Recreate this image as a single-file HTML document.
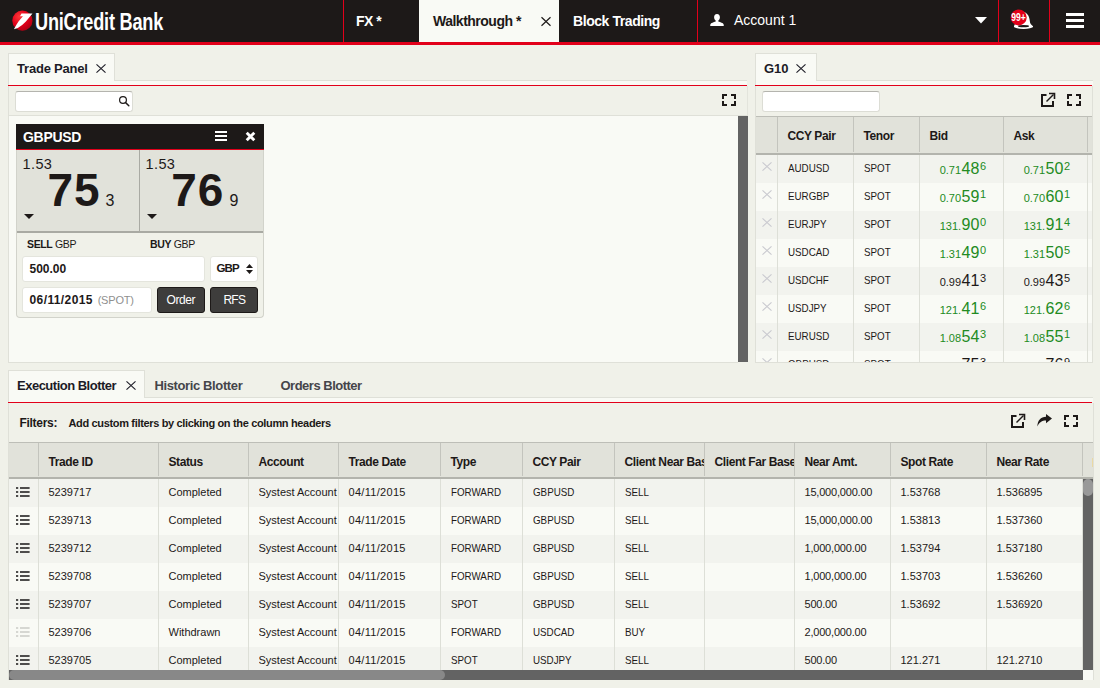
<!DOCTYPE html>
<html lang="en">
<head>
<meta charset="utf-8">
<title>UniCredit Bank - FX Trading</title>
<style>
*{box-sizing:border-box;margin:0;padding:0}
html,body{width:1100px;height:688px;overflow:hidden}
body{background:#f0f1e9;font-family:"Liberation Sans",sans-serif;color:#1d1918;position:relative;font-size:11px}
.abs{position:absolute}
.t{position:absolute;white-space:nowrap;line-height:1}
svg{position:absolute;overflow:visible}
/* top bar */
#top{left:0;top:0;width:1100px;height:42px;background:#1d1918}
#topline{left:0;top:42px;width:1100px;height:3px;background:#e2001a}
.vsep{position:absolute;top:0;width:1px;height:42px;background:#e2001a}
#navact{left:419px;top:0;width:140px;height:42px;background:#f9faf5}
.nav{font-weight:bold;font-size:14px;color:#fff}
/* panels */
.tab{position:absolute;background:#f9faf5;border:1px solid #dfe0d8;border-bottom:none;height:28px}
.strip{position:absolute;background:#f9faf5;height:5px;border-top:1px solid #dfe0d8}
.red{position:absolute;height:1px;background:#e2001a}
.tabtxt{font-weight:bold;font-size:13px;color:#1c1b26}
.tabtxt2{font-weight:bold;font-size:13px;color:#45454a}
.inp{position:absolute;background:#fff;border:1px solid #dcddd5;border-top-color:#b4b4ae;border-radius:3px}
.body{position:absolute;background:#f9faf5}
.hline{position:absolute;height:1px}
.vline{position:absolute;width:1px}
.sb{position:absolute;background:#636363}
/* grids */
.gh{position:absolute;background:#e1e2da}
.ght{font-weight:bold;font-size:12px;color:#1d1918;letter-spacing:-0.4px}
.u{transform-origin:0 50%;transform:scaleX(0.89)}
.row{position:absolute;height:28px}
.odd{background:#f2f3ee}
.even{background:#f9faf5}
.c{position:absolute;white-space:nowrap;line-height:1;font-size:11px;color:#1d1918;top:8px}
.pr{position:absolute;top:0;height:28px;white-space:nowrap;line-height:1}
.ps{font-size:11px;position:relative;top:6px}
.pb{font-size:16px;position:relative;top:6px;margin-left:0.5px}
.pp{font-size:11px;position:relative;top:2px;margin-left:0.5px}
</style>
</head>
<body>
<!-- ===== TOP BAR ===== -->
<div id="top" class="abs"></div>
<div id="topline" class="abs"></div>
<div id="navact" class="abs"></div>
<div class="vsep" style="left:343px"></div>
<div class="vsep" style="left:697px"></div>
<div class="vsep" style="left:998px"></div>
<div class="vsep" style="left:1049px"></div>
<svg style="left:10px;top:8px" width="26" height="26" viewBox="10 8 26 26">
<defs><radialGradient id="lg" cx="35%" cy="30%" r="75%"><stop offset="0" stop-color="#ff3a3a"/><stop offset="0.55" stop-color="#e2001a"/><stop offset="1" stop-color="#b00014"/></radialGradient></defs>
<circle cx="22.4" cy="20.7" r="10.1" fill="url(#lg)"/>
<path d="M21.5 13.4 L32.5 13.4 L25.9 21.4 Q22 25.6 17.8 27.9 L13.9 29.2 Q16 25 18.5 21.4 L22.9 16.2 L20 16.2 Z" fill="#fff"/>
</svg>
<div id="brand" class="t" style="left:34.7px;top:9.6px;font-size:24px;font-weight:bold;color:#fff;transform-origin:0 0;transform:scaleX(0.757);letter-spacing:-0.3px">UniCredit Bank</div>

<div id="n1" class="t nav" style="left:356px;top:14px;letter-spacing:-0.5px">FX *</div>
<div id="n2" class="t nav" style="left:433px;top:14px;color:#1d1918;letter-spacing:-0.5px">Walkthrough *</div>
<svg style="left:541px;top:17px" width="10" height="9" viewBox="0 0 10 9"><path d="M0.5 0.3 L9.5 8.7 M9.5 0.3 L0.5 8.7" stroke="#1d1918" stroke-width="1.2" fill="none"/></svg>
<div id="n3" class="t nav" style="left:573px;top:14px;letter-spacing:-0.43px">Block Trading</div>
<svg style="left:710px;top:14px" width="14" height="12" viewBox="0 0 14 12"><path d="M7 0 C9 0 9.9 1.4 9.9 3.2 C9.9 4.8 9.2 6 8.3 6.6 L8.3 7.6 C10.5 8.4 13 9 13.6 10.2 L13.8 12 L0.2 12 L0.4 10.2 C1 9 3.5 8.4 5.7 7.6 L5.7 6.6 C4.8 6 4.1 4.8 4.1 3.2 C4.1 1.4 5 0 7 0 Z" fill="#fff"/></svg>
<div id="n4" class="t" style="left:734px;top:13px;font-size:14px;color:#fff">Account 1</div>
<svg style="left:975px;top:17px" width="12" height="7" viewBox="0 0 12 7"><path d="M0 0 L12 0 L6 6.5 Z" fill="#fff"/></svg>
<!-- bell + badge -->
<svg style="left:1008px;top:8px" width="28" height="24" viewBox="1008 8 28 24">
<path d="M1021 11.5 C1027 11.5 1029.5 16 1029.8 21 C1030 24 1031.5 25 1033 26.2 L1033 27.2 L1014 27.2 L1014 26 Z" fill="#fff"/>
<ellipse cx="1023.5" cy="26.6" rx="9.2" ry="2.3" fill="#fff"/>
<ellipse cx="1023.5" cy="26.2" rx="5.5" ry="1.1" fill="#1d1918"/>
<circle cx="1018.7" cy="17.4" r="8" fill="#e2001a"/>
<text x="1018.6" y="20.6" font-family="Liberation Sans, sans-serif" font-size="10.2" font-weight="bold" fill="#fff" text-anchor="middle" textLength="14.5" lengthAdjust="spacingAndGlyphs">99+</text>
</svg>
<div class="abs" style="left:1066px;top:13px;width:18px;height:3px;background:#fff"></div>
<div class="abs" style="left:1066px;top:19px;width:18px;height:3px;background:#fff"></div>
<div class="abs" style="left:1066px;top:25px;width:18px;height:3px;background:#fff"></div>

<!-- ===== TRADE PANEL ===== -->
<div class="tab" style="left:8px;top:53px;width:107px"></div>
<div class="strip" style="left:8px;top:80px;width:739px;border-left:1px solid #dfe0d8"></div>
<div class="abs" style="left:9px;top:80px;width:105px;height:2px;background:#f9faf5"></div>
<div class="red" style="left:8px;top:85px;width:739px"></div>
<div id="tt1" class="t tabtxt" style="left:17px;top:62px;letter-spacing:-0.2px">Trade Panel</div>
<svg style="left:96px;top:64px" width="10" height="9" viewBox="0 0 10 9"><path d="M0.5 0.3 L9.5 8.7 M9.5 0.3 L0.5 8.7" stroke="#1c1b26" stroke-width="1.1" fill="none"/></svg>
<div class="abs" style="left:8px;top:86px;width:740px;height:30px;border-left:1px solid #dfe0d8;border-right:1px solid #e3e4dc;border-bottom:1px solid #dfe0d8"></div>
<div class="inp" style="left:15px;top:91px;width:118px;height:21px"></div>
<svg style="left:118px;top:95px" width="12" height="12" viewBox="118 95 12 12"><circle cx="123" cy="100" r="3.4" stroke="#1d1918" stroke-width="1.2" fill="none"/><path d="M125.5 102.5 L128.8 105.8" stroke="#1d1918" stroke-width="1.5" stroke-linecap="round"/></svg>
<svg style="left:722px;top:94px" width="14" height="12" viewBox="0 0 14 12"><path d="M1 5 V1 H5 M9 1 H13 V5 M13 7 V11 H9 M5 11 H1 V7" stroke="#1d1918" stroke-width="2" fill="none"/></svg>
<div class="body" style="left:8px;top:116px;width:730px;height:247px;border-left:1px solid #dfe0d8;border-bottom:1px solid #dfe0d8"></div>
<div class="sb" style="left:738px;top:116px;width:10px;height:246px"></div>
<div class="abs" style="left:16px;top:124px;width:248px;height:194px;background:#f0f1e9;border:1px solid #d2d3cb;border-top:none;border-radius:0 0 4px 4px"></div>
<div class="abs" style="left:16px;top:124px;width:248px;height:25px;background:#1d1918"></div>
<div class="abs" style="left:16px;top:149px;width:248px;height:1px;background:#e2001a"></div>
<div id="g1" class="t" style="left:23px;top:129.6px;font-size:14px;font-weight:bold;color:#fff;letter-spacing:-0.3px">GBPUSD</div>
<div class="abs" style="left:215px;top:130.5px;width:12px;height:2px;background:#fff"></div>
<div class="abs" style="left:215px;top:134.7px;width:12px;height:2px;background:#fff"></div>
<div class="abs" style="left:215px;top:139px;width:12px;height:2px;background:#fff"></div>
<svg style="left:244.6px;top:130.8px" width="11" height="11" viewBox="0 0 11 11"><path d="M1.7 1.7 L9.3 9.3 M9.3 1.7 L1.7 9.3" stroke="#fff" stroke-width="2.9" fill="none"/></svg>
<div class="abs" style="left:17px;top:150px;width:246px;height:81px;background:#e1e2da"></div>
<div class="abs" style="left:139px;top:150px;width:1px;height:81px;background:#a9aaa3"></div>
<div class="abs" style="left:17px;top:231px;width:246px;height:2px;background:#a9aaa3"></div>
<div id="p1a" class="t" style="left:22.5px;top:156.6px;font-size:14.5px;color:#1d1918;letter-spacing:0.4px">1.53</div>
<div id="p1b" class="t" style="left:47.5px;top:167px;font-size:46px;font-weight:bold;color:#1d1918;letter-spacing:1px">75</div>
<div id="p1c" class="t" style="left:105.5px;top:193px;font-size:16px;color:#1d1918">3</div>
<svg style="left:24px;top:214px" width="10" height="5" viewBox="0 0 10 5"><path d="M0 0 H10 L5 5 Z" fill="#1d1918"/></svg>
<div id="p2a" class="t" style="left:145.5px;top:156.6px;font-size:14.5px;color:#1d1918;letter-spacing:0.4px">1.53</div>
<div id="p2b" class="t" style="left:171.2px;top:167px;font-size:46px;font-weight:bold;color:#1d1918;letter-spacing:1px">76</div>
<div id="p2c" class="t" style="left:229.5px;top:193px;font-size:16px;color:#1d1918">9</div>
<svg style="left:147px;top:214px" width="10" height="5" viewBox="0 0 10 5"><path d="M0 0 H10 L5 5 Z" fill="#1d1918"/></svg>
<div id="l1" class="t" style="left:27px;top:239px;font-size:10.5px;color:#1d1918;letter-spacing:-0.35px"><b>SELL</b> GBP</div>
<div id="l2" class="t" style="left:150px;top:239px;font-size:10.5px;color:#1d1918;letter-spacing:-0.35px"><b>BUY</b> GBP</div>
<div class="abs" style="left:22px;top:256px;width:183px;height:26px;background:#fff;border:1px solid #e4e5dd;border-radius:3px"></div>
<div id="i1" class="t" style="left:29.5px;top:263px;font-size:12px;font-weight:bold;color:#1d1918">500.00</div>
<div class="abs" style="left:210px;top:256px;width:48px;height:26px;background:#fff;border:1px solid #e4e5dd;border-radius:3px"></div>
<div id="i2" class="t" style="left:216.5px;top:263px;font-size:11.5px;font-weight:bold;color:#1d1918;letter-spacing:-0.9px">GBP</div>
<svg style="left:246px;top:264px" width="7" height="10" viewBox="0 0 7 10"><path d="M0 4 L3.5 0 L7 4 Z M0 6 L3.5 10 L7 6 Z" fill="#1d1918"/></svg>
<div class="abs" style="left:22px;top:287px;width:130px;height:26px;background:#fff;border:1px solid #e4e5dd;border-radius:3px"></div>
<div id="i3" class="t" style="left:29.5px;top:294px;font-size:12px;font-weight:bold;color:#1d1918;letter-spacing:0.4px">06/11/2015 <span style="font-weight:normal;color:#8f8f8f;letter-spacing:-0.2px;font-size:11px;margin-left:1px">(SPOT)</span></div>
<div class="abs" style="left:157px;top:287px;width:48px;height:26px;background:#3e3d3c;border:1px solid #1d1918;border-radius:3px"></div>
<div id="b1" class="t" style="left:166.5px;top:294px;font-size:12px;color:#fff;letter-spacing:-0.4px">Order</div>
<div class="abs" style="left:210px;top:287px;width:48px;height:26px;background:#3e3d3c;border:1px solid #1d1918;border-radius:3px"></div>
<div id="b2" class="t" style="left:223.5px;top:294px;font-size:12px;color:#fff;letter-spacing:-0.8px">RFS</div>


<!-- ===== G10 PANEL ===== -->
<div class="tab" style="left:755px;top:53px;width:62px"></div>
<div class="strip" style="left:755px;top:80px;width:338px;border-left:1px solid #dfe0d8"></div>
<div class="abs" style="left:756px;top:80px;width:60px;height:2px;background:#f9faf5"></div>
<div class="red" style="left:755px;top:85px;width:337px"></div>
<div id="tt2" class="t tabtxt" style="left:764px;top:62px">G10</div>
<svg style="left:796px;top:64px" width="10" height="9" viewBox="0 0 10 9"><path d="M0.5 0.3 L9.5 8.7 M9.5 0.3 L0.5 8.7" stroke="#1c1b26" stroke-width="1.1" fill="none"/></svg>
<div class="abs" style="left:755px;top:86px;width:338px;height:30px;border-left:1px solid #dfe0d8;border-right:1px solid #dfe0d8"></div>
<div class="inp" style="left:762px;top:91px;width:118px;height:21px"></div>
<svg style="left:1041px;top:93px" width="14" height="14" viewBox="0 0 14 14"><path d="M5.5 2 H1 V13 H12 V8" stroke="#1d1918" stroke-width="2" fill="none"/><path d="M5.5 8.5 L12.5 1.5" stroke="#1d1918" stroke-width="1.4" fill="none"/><path d="M8 0.5 H13.5 V6" stroke="#1d1918" stroke-width="1.6" fill="none"/></svg><svg style="left:1067px;top:94px" width="14" height="12" viewBox="0 0 14 12"><path d="M1 5 V1 H5 M9 1 H13 V5 M13 7 V11 H9 M5 11 H1 V7" stroke="#1d1918" stroke-width="2" fill="none"/></svg>
<div id="g10" class="abs" style="left:755px;top:116px;width:338px;height:247px;overflow:hidden;border-left:1px solid #dfe0d8;border-right:1px solid #dfe0d8;border-bottom:1px solid #dfe0d8;background:#f9faf5">
<div class="gh" style="left:0;top:0;width:338px;height:37px;border-top:1px solid #bdbeb7"></div>
<div class="abs" style="left:0;top:37px;width:338px;height:2px;background:#b3b4ad"></div>
<div class="t ght" style="left:31.5px;top:14px">CCY Pair</div>
<div class="t ght" style="left:107.5px;top:14px">Tenor</div>
<div class="t ght" style="left:173.5px;top:14px">Bid</div>
<div class="t ght" style="left:257.5px;top:14px">Ask</div>
<div class="row odd" style="left:0;top:39px;width:338px"><svg style="left:6px;top:7px" width="10" height="9" viewBox="0 0 10 9"><path d="M0.5 0.3 L9.5 8.7 M9.5 0.3 L0.5 8.7" stroke="#c9c9cf" stroke-width="1.1" fill="none"/></svg><span class="c u" style="left:31.5px">AUDUSD</span><span class="c u" style="left:107.5px">SPOT</span><span class="pr" style="right:108px;color:#228b22"><span class="ps">0.71</span><span class="pb">48</span><span class="pp">6</span></span><span class="pr" style="right:24px;color:#228b22"><span class="ps">0.71</span><span class="pb">50</span><span class="pp">2</span></span></div>
<div class="row even" style="left:0;top:67px;width:338px"><svg style="left:6px;top:7px" width="10" height="9" viewBox="0 0 10 9"><path d="M0.5 0.3 L9.5 8.7 M9.5 0.3 L0.5 8.7" stroke="#c9c9cf" stroke-width="1.1" fill="none"/></svg><span class="c u" style="left:31.5px">EURGBP</span><span class="c u" style="left:107.5px">SPOT</span><span class="pr" style="right:108px;color:#228b22"><span class="ps">0.70</span><span class="pb">59</span><span class="pp">1</span></span><span class="pr" style="right:24px;color:#228b22"><span class="ps">0.70</span><span class="pb">60</span><span class="pp">1</span></span></div>
<div class="row odd" style="left:0;top:95px;width:338px"><svg style="left:6px;top:7px" width="10" height="9" viewBox="0 0 10 9"><path d="M0.5 0.3 L9.5 8.7 M9.5 0.3 L0.5 8.7" stroke="#c9c9cf" stroke-width="1.1" fill="none"/></svg><span class="c u" style="left:31.5px">EURJPY</span><span class="c u" style="left:107.5px">SPOT</span><span class="pr" style="right:108px;color:#228b22"><span class="ps">131.</span><span class="pb">90</span><span class="pp">0</span></span><span class="pr" style="right:24px;color:#228b22"><span class="ps">131.</span><span class="pb">91</span><span class="pp">4</span></span></div>
<div class="row even" style="left:0;top:123px;width:338px"><svg style="left:6px;top:7px" width="10" height="9" viewBox="0 0 10 9"><path d="M0.5 0.3 L9.5 8.7 M9.5 0.3 L0.5 8.7" stroke="#c9c9cf" stroke-width="1.1" fill="none"/></svg><span class="c u" style="left:31.5px">USDCAD</span><span class="c u" style="left:107.5px">SPOT</span><span class="pr" style="right:108px;color:#228b22"><span class="ps">1.31</span><span class="pb">49</span><span class="pp">0</span></span><span class="pr" style="right:24px;color:#228b22"><span class="ps">1.31</span><span class="pb">50</span><span class="pp">5</span></span></div>
<div class="row odd" style="left:0;top:151px;width:338px"><svg style="left:6px;top:7px" width="10" height="9" viewBox="0 0 10 9"><path d="M0.5 0.3 L9.5 8.7 M9.5 0.3 L0.5 8.7" stroke="#c9c9cf" stroke-width="1.1" fill="none"/></svg><span class="c u" style="left:31.5px">USDCHF</span><span class="c u" style="left:107.5px">SPOT</span><span class="pr" style="right:108px;color:#1d1918"><span class="ps">0.99</span><span class="pb">41</span><span class="pp">3</span></span><span class="pr" style="right:24px;color:#1d1918"><span class="ps">0.99</span><span class="pb">43</span><span class="pp">5</span></span></div>
<div class="row even" style="left:0;top:179px;width:338px"><svg style="left:6px;top:7px" width="10" height="9" viewBox="0 0 10 9"><path d="M0.5 0.3 L9.5 8.7 M9.5 0.3 L0.5 8.7" stroke="#c9c9cf" stroke-width="1.1" fill="none"/></svg><span class="c u" style="left:31.5px">USDJPY</span><span class="c u" style="left:107.5px">SPOT</span><span class="pr" style="right:108px;color:#228b22"><span class="ps">121.</span><span class="pb">41</span><span class="pp">6</span></span><span class="pr" style="right:24px;color:#228b22"><span class="ps">121.</span><span class="pb">62</span><span class="pp">6</span></span></div>
<div class="row odd" style="left:0;top:207px;width:338px"><svg style="left:6px;top:7px" width="10" height="9" viewBox="0 0 10 9"><path d="M0.5 0.3 L9.5 8.7 M9.5 0.3 L0.5 8.7" stroke="#c9c9cf" stroke-width="1.1" fill="none"/></svg><span class="c u" style="left:31.5px">EURUSD</span><span class="c u" style="left:107.5px">SPOT</span><span class="pr" style="right:108px;color:#228b22"><span class="ps">1.08</span><span class="pb">54</span><span class="pp">3</span></span><span class="pr" style="right:24px;color:#228b22"><span class="ps">1.08</span><span class="pb">55</span><span class="pp">1</span></span></div>
<div class="row even" style="left:0;top:235px;width:338px"><svg style="left:6px;top:7px" width="10" height="9" viewBox="0 0 10 9"><path d="M0.5 0.3 L9.5 8.7 M9.5 0.3 L0.5 8.7" stroke="#c9c9cf" stroke-width="1.1" fill="none"/></svg><span class="c u" style="left:31.5px">GBPUSD</span><span class="c u" style="left:107.5px">SPOT</span><span class="pr" style="right:108px;color:#1d1918"><span class="ps">1.53</span><span class="pb">75</span><span class="pp">3</span></span><span class="pr" style="right:24px;color:#1d1918"><span class="ps">1.53</span><span class="pb">76</span><span class="pp">9</span></span></div>
<div class="vline" style="left:21px;top:1px;height:35px;background:#c3c4bd"></div><div class="vline" style="left:21px;top:39px;height:208px;background:#dddfd7"></div>
<div class="vline" style="left:97px;top:1px;height:35px;background:#c3c4bd"></div><div class="vline" style="left:97px;top:39px;height:208px;background:#dddfd7"></div>
<div class="vline" style="left:163px;top:1px;height:35px;background:#c3c4bd"></div><div class="vline" style="left:163px;top:39px;height:208px;background:#dddfd7"></div>
<div class="vline" style="left:247px;top:1px;height:35px;background:#c3c4bd"></div><div class="vline" style="left:247px;top:39px;height:208px;background:#dddfd7"></div>
<div class="vline" style="left:331px;top:1px;height:35px;background:#c3c4bd"></div><div class="vline" style="left:331px;top:39px;height:208px;background:#dddfd7"></div>
</div>

<!-- ===== BLOTTER ===== -->
<div class="tab" style="left:8px;top:370px;width:137px"></div>
<div class="strip" style="left:8px;top:397px;width:1085px;border-left:1px solid #dfe0d8"></div>
<div class="abs" style="left:9px;top:397px;width:135px;height:2px;background:#f9faf5"></div>
<div class="red" style="left:8px;top:402px;width:1084px"></div>
<div id="bt1" class="t tabtxt" style="left:17px;top:379px;letter-spacing:-0.5px">Execution Blotter</div>
<svg style="left:126px;top:381px" width="10" height="9" viewBox="0 0 10 9"><path d="M0.5 0.3 L9.5 8.7 M9.5 0.3 L0.5 8.7" stroke="#1c1b26" stroke-width="1.1" fill="none"/></svg>
<div id="bt2" class="t tabtxt2" style="left:154.5px;top:379px;letter-spacing:-0.38px">Historic Blotter</div>
<div id="bt3" class="t tabtxt2" style="left:280.5px;top:379px;letter-spacing:-0.5px">Orders Blotter</div>
<div class="abs" style="left:8px;top:403px;width:1086px;height:39px;border-left:1px solid #dfe0d8;border-right:1px solid #dfe0d8"></div>
<div id="f1" class="t" style="left:19.5px;top:417px;font-size:12px;font-weight:bold;color:#1d1918;letter-spacing:-0.3px">Filters:</div>
<div id="f2" class="t" style="left:68.5px;top:418px;font-size:11px;font-weight:bold;color:#1d1918;letter-spacing:-0.34px">Add custom filters by clicking on the column headers</div>
<svg style="left:1011px;top:414px" width="14" height="14" viewBox="0 0 14 14"><path d="M5.5 2 H1 V13 H12 V8" stroke="#1d1918" stroke-width="2" fill="none"/><path d="M5.5 8.5 L12.5 1.5" stroke="#1d1918" stroke-width="1.4" fill="none"/><path d="M8 0.5 H13.5 V6" stroke="#1d1918" stroke-width="1.6" fill="none"/></svg><svg style="left:1037px;top:414px" width="15" height="13" viewBox="0 0 15 13"><path d="M9 0 L15 4.6 L9 9.2 V6.4 C5 6.4 2.2 8 0.4 12.6 C0.4 6.5 3.8 3 9 2.8 Z" fill="#1d1918"/></svg><svg style="left:1064px;top:415px" width="14" height="12" viewBox="0 0 14 12"><path d="M1 5 V1 H5 M9 1 H13 V5 M13 7 V11 H9 M5 11 H1 V7" stroke="#1d1918" stroke-width="2" fill="none"/></svg>
<div id="blot" class="abs" style="left:8px;top:442px;width:1086px;height:238px;overflow:hidden;border-left:1px solid #dfe0d8;background:#f9faf5">
<div class="gh" style="left:0;top:0;width:1085px;height:35px;border-top:1px solid #bdbeb7"></div>
<div class="abs" style="left:0;top:35px;width:1085px;height:2px;background:#b3b4ad"></div>
<div class="abs" style="left:30px;top:1px;width:120px;height:34px;overflow:hidden"><div class="t ght" style="left:9.5px;top:13px">Trade ID</div></div>
<div class="abs" style="left:150px;top:1px;width:90px;height:34px;overflow:hidden"><div class="t ght" style="left:9.5px;top:13px">Status</div></div>
<div class="abs" style="left:240px;top:1px;width:90px;height:34px;overflow:hidden"><div class="t ght" style="left:9.5px;top:13px">Account</div></div>
<div class="abs" style="left:330px;top:1px;width:102px;height:34px;overflow:hidden"><div class="t ght" style="left:9.5px;top:13px">Trade Date</div></div>
<div class="abs" style="left:432px;top:1px;width:82px;height:34px;overflow:hidden"><div class="t ght" style="left:9.5px;top:13px">Type</div></div>
<div class="abs" style="left:514px;top:1px;width:92px;height:34px;overflow:hidden"><div class="t ght" style="left:9.5px;top:13px">CCY Pair</div></div>
<div class="abs" style="left:606px;top:1px;width:90px;height:34px;overflow:hidden"><div class="t ght" style="left:9.5px;top:13px">Client Near Base</div></div>
<div class="abs" style="left:696px;top:1px;width:90px;height:34px;overflow:hidden"><div class="t ght" style="left:9.5px;top:13px">Client Far Base</div></div>
<div class="abs" style="left:786px;top:1px;width:96px;height:34px;overflow:hidden"><div class="t ght" style="left:9.5px;top:13px">Near Amt.</div></div>
<div class="abs" style="left:882px;top:1px;width:96px;height:34px;overflow:hidden"><div class="t ght" style="left:9.5px;top:13px">Spot Rate</div></div>
<div class="abs" style="left:978px;top:1px;width:96px;height:34px;overflow:hidden"><div class="t ght" style="left:9.5px;top:13px">Near Rate</div></div>
<div class="row odd" style="left:0;top:37px;width:1074px"><svg style="left:7px;top:8px" width="14" height="10" viewBox="0 0 14 10"><path d="M0 1 H2.2 M4 1 H13.6 M0 5 H2.2 M4 5 H13.6 M0 9 H2.2 M4 9 H13.6" stroke="#4e4d4c" stroke-width="2" fill="none"/></svg><span class="c" style="left:39.5px">5239717</span><span class="c" style="left:159.5px">Completed</span><span class="c" style="left:249.5px;width:80px;overflow:hidden">Systest Account</span><span class="c" style="left:339.5px;letter-spacing:0.3px">04/11/2015</span><span class="c u" style="left:441.5px">FORWARD</span><span class="c u" style="left:523.5px">GBPUSD</span><span class="c u" style="left:615.5px">SELL</span><span class="c" style="left:795.5px;letter-spacing:-0.2px">15,000,000.00</span><span class="c" style="left:891.5px">1.53768</span><span class="c" style="left:987.5px">1.536895</span></div>
<div class="row even" style="left:0;top:65px;width:1074px"><svg style="left:7px;top:8px" width="14" height="10" viewBox="0 0 14 10"><path d="M0 1 H2.2 M4 1 H13.6 M0 5 H2.2 M4 5 H13.6 M0 9 H2.2 M4 9 H13.6" stroke="#4e4d4c" stroke-width="2" fill="none"/></svg><span class="c" style="left:39.5px">5239713</span><span class="c" style="left:159.5px">Completed</span><span class="c" style="left:249.5px;width:80px;overflow:hidden">Systest Account</span><span class="c" style="left:339.5px;letter-spacing:0.3px">04/11/2015</span><span class="c u" style="left:441.5px">FORWARD</span><span class="c u" style="left:523.5px">GBPUSD</span><span class="c u" style="left:615.5px">SELL</span><span class="c" style="left:795.5px;letter-spacing:-0.2px">15,000,000.00</span><span class="c" style="left:891.5px">1.53813</span><span class="c" style="left:987.5px">1.537360</span></div>
<div class="row odd" style="left:0;top:93px;width:1074px"><svg style="left:7px;top:8px" width="14" height="10" viewBox="0 0 14 10"><path d="M0 1 H2.2 M4 1 H13.6 M0 5 H2.2 M4 5 H13.6 M0 9 H2.2 M4 9 H13.6" stroke="#4e4d4c" stroke-width="2" fill="none"/></svg><span class="c" style="left:39.5px">5239712</span><span class="c" style="left:159.5px">Completed</span><span class="c" style="left:249.5px;width:80px;overflow:hidden">Systest Account</span><span class="c" style="left:339.5px;letter-spacing:0.3px">04/11/2015</span><span class="c u" style="left:441.5px">FORWARD</span><span class="c u" style="left:523.5px">GBPUSD</span><span class="c u" style="left:615.5px">SELL</span><span class="c" style="left:795.5px;letter-spacing:-0.2px">1,000,000.00</span><span class="c" style="left:891.5px">1.53794</span><span class="c" style="left:987.5px">1.537180</span></div>
<div class="row even" style="left:0;top:121px;width:1074px"><svg style="left:7px;top:8px" width="14" height="10" viewBox="0 0 14 10"><path d="M0 1 H2.2 M4 1 H13.6 M0 5 H2.2 M4 5 H13.6 M0 9 H2.2 M4 9 H13.6" stroke="#4e4d4c" stroke-width="2" fill="none"/></svg><span class="c" style="left:39.5px">5239708</span><span class="c" style="left:159.5px">Completed</span><span class="c" style="left:249.5px;width:80px;overflow:hidden">Systest Account</span><span class="c" style="left:339.5px;letter-spacing:0.3px">04/11/2015</span><span class="c u" style="left:441.5px">FORWARD</span><span class="c u" style="left:523.5px">GBPUSD</span><span class="c u" style="left:615.5px">SELL</span><span class="c" style="left:795.5px;letter-spacing:-0.2px">1,000,000.00</span><span class="c" style="left:891.5px">1.53703</span><span class="c" style="left:987.5px">1.536260</span></div>
<div class="row odd" style="left:0;top:149px;width:1074px"><svg style="left:7px;top:8px" width="14" height="10" viewBox="0 0 14 10"><path d="M0 1 H2.2 M4 1 H13.6 M0 5 H2.2 M4 5 H13.6 M0 9 H2.2 M4 9 H13.6" stroke="#4e4d4c" stroke-width="2" fill="none"/></svg><span class="c" style="left:39.5px">5239707</span><span class="c" style="left:159.5px">Completed</span><span class="c" style="left:249.5px;width:80px;overflow:hidden">Systest Account</span><span class="c" style="left:339.5px;letter-spacing:0.3px">04/11/2015</span><span class="c u" style="left:441.5px">SPOT</span><span class="c u" style="left:523.5px">GBPUSD</span><span class="c u" style="left:615.5px">SELL</span><span class="c" style="left:795.5px;letter-spacing:-0.2px">500.00</span><span class="c" style="left:891.5px">1.53692</span><span class="c" style="left:987.5px">1.536920</span></div>
<div class="row even" style="left:0;top:177px;width:1074px"><svg style="left:7px;top:8px" width="14" height="10" viewBox="0 0 14 10"><path d="M0 1 H2.2 M4 1 H13.6 M0 5 H2.2 M4 5 H13.6 M0 9 H2.2 M4 9 H13.6" stroke="#d6d7d2" stroke-width="2" fill="none"/></svg><span class="c" style="left:39.5px">5239706</span><span class="c" style="left:159.5px">Withdrawn</span><span class="c" style="left:249.5px;width:80px;overflow:hidden">Systest Account</span><span class="c" style="left:339.5px;letter-spacing:0.3px">04/11/2015</span><span class="c u" style="left:441.5px">FORWARD</span><span class="c u" style="left:523.5px">USDCAD</span><span class="c u" style="left:615.5px">BUY</span><span class="c" style="left:795.5px;letter-spacing:-0.2px">2,000,000.00</span></div>
<div class="row odd" style="left:0;top:205px;width:1074px"><svg style="left:7px;top:8px" width="14" height="10" viewBox="0 0 14 10"><path d="M0 1 H2.2 M4 1 H13.6 M0 5 H2.2 M4 5 H13.6 M0 9 H2.2 M4 9 H13.6" stroke="#4e4d4c" stroke-width="2" fill="none"/></svg><span class="c" style="left:39.5px">5239705</span><span class="c" style="left:159.5px">Completed</span><span class="c" style="left:249.5px;width:80px;overflow:hidden">Systest Account</span><span class="c" style="left:339.5px;letter-spacing:0.3px">04/11/2015</span><span class="c u" style="left:441.5px">SPOT</span><span class="c u" style="left:523.5px">USDJPY</span><span class="c u" style="left:615.5px">SELL</span><span class="c" style="left:795.5px;letter-spacing:-0.2px">500.00</span><span class="c" style="left:891.5px">121.271</span><span class="c" style="left:987.5px">121.2710</span></div>
<div class="vline" style="left:29px;top:1px;height:33px;background:#c3c4bd"></div><div class="vline" style="left:29px;top:37px;height:191px;background:#dddfd7"></div>
<div class="vline" style="left:149px;top:1px;height:33px;background:#c3c4bd"></div><div class="vline" style="left:149px;top:37px;height:191px;background:#dddfd7"></div>
<div class="vline" style="left:239px;top:1px;height:33px;background:#c3c4bd"></div><div class="vline" style="left:239px;top:37px;height:191px;background:#dddfd7"></div>
<div class="vline" style="left:329px;top:1px;height:33px;background:#c3c4bd"></div><div class="vline" style="left:329px;top:37px;height:191px;background:#dddfd7"></div>
<div class="vline" style="left:431px;top:1px;height:33px;background:#c3c4bd"></div><div class="vline" style="left:431px;top:37px;height:191px;background:#dddfd7"></div>
<div class="vline" style="left:513px;top:1px;height:33px;background:#c3c4bd"></div><div class="vline" style="left:513px;top:37px;height:191px;background:#dddfd7"></div>
<div class="vline" style="left:605px;top:1px;height:33px;background:#c3c4bd"></div><div class="vline" style="left:605px;top:37px;height:191px;background:#dddfd7"></div>
<div class="vline" style="left:695px;top:1px;height:33px;background:#c3c4bd"></div><div class="vline" style="left:695px;top:37px;height:191px;background:#dddfd7"></div>
<div class="vline" style="left:785px;top:1px;height:33px;background:#c3c4bd"></div><div class="vline" style="left:785px;top:37px;height:191px;background:#dddfd7"></div>
<div class="vline" style="left:881px;top:1px;height:33px;background:#c3c4bd"></div><div class="vline" style="left:881px;top:37px;height:191px;background:#dddfd7"></div>
<div class="vline" style="left:977px;top:1px;height:33px;background:#c3c4bd"></div><div class="vline" style="left:977px;top:37px;height:191px;background:#dddfd7"></div>
<div class="vline" style="left:1073px;top:1px;height:33px;background:#c3c4bd"></div><div class="vline" style="left:1073px;top:37px;height:191px;background:#dddfd7"></div>
<div class="abs" style="left:1083px;top:16px;width:1px;height:9px;background:#ead9a4"></div>
<div class="sb" style="left:1074px;top:37px;width:10px;height:191px"></div>
<div class="abs" style="left:1074px;top:37px;width:10px;height:17px;background:#999;border-radius:5px"></div>
<div class="sb" style="left:0;top:228px;width:1074px;height:10px"></div>
<div class="abs" style="left:0;top:228px;width:436px;height:10px;background:#888;border-radius:5px"></div>
</div>
<div class="vline" style="left:1093px;top:442px;height:238px;background:#dfe0d8"></div>

</body>
</html>
